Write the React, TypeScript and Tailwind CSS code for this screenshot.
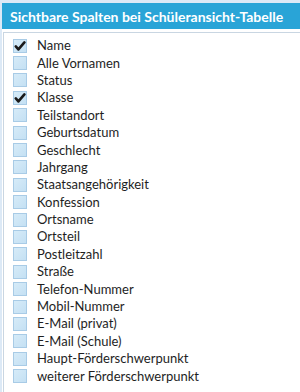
import React from "react";

const items: [string, boolean][] = [
  ["Name", true],
  ["Alle Vornamen", false],
  ["Status", false],
  ["Klasse", true],
  ["Teilstandort", false],
  ["Geburtsdatum", false],
  ["Geschlecht", false],
  ["Jahrgang", false],
  ["Staatsangehörigkeit", false],
  ["Konfession", false],
  ["Ortsname", false],
  ["Ortsteil", false],
  ["Postleitzahl", false],
  ["Straße", false],
  ["Telefon-Nummer", false],
  ["Mobil-Nummer", false],
  ["E-Mail (privat)", false],
  ["E-Mail (Schule)", false],
  ["Haupt-Förderschwerpunkt", false],
  ["weiterer Förderschwerpunkt", false],
];

function Box({ checked }: { checked: boolean }) {
  return (
    <div className="w-[14px] h-[14px] shrink-0 border border-[#a8cbe6] bg-gradient-to-br from-[#d6ebf8] to-[#c4e0f3] flex items-center justify-center">
      {checked && (
        <svg width="12" height="12" viewBox="0 0 12 12">
          <path d="M1.8 6.4 L4.4 9.4 L10.4 2.4" fill="none" stroke="#1a1a1a" strokeWidth="2.6" strokeLinecap="round" strokeLinejoin="round" />
        </svg>
      )}
    </div>
  );
}

export default function App() {
  return (
    <div className="w-[300px] h-[392px] bg-[#dce9f6] pt-[3px] pl-[2px] overflow-hidden" style={{ fontFamily: 'Lato, "Noto Sans", sans-serif' }}>
      <div className="h-full flex flex-col bg-white">
        <div className="h-[26px] bg-[#29a4d7] flex items-center pl-[8px] text-white font-bold text-[14px] whitespace-nowrap">
          Sichtbare Spalten bei Schüleransicht-Tabelle
        </div>
        <div className="h-[3px] bg-white" />
        <div className="flex-1 border-l border-t border-[#c9d6e2] ml-[1px] pt-[4px]">
          {items.map(([label, checked]) => (
            <div key={label} className="h-[17.4px] flex items-center pl-[9px] gap-[10px]">
              <Box checked={checked} />
              <span className="text-[13px] text-[#1e1e1e] leading-none whitespace-nowrap">{label}</span>
            </div>
          ))}
        </div>
      </div>
    </div>
  );
}
